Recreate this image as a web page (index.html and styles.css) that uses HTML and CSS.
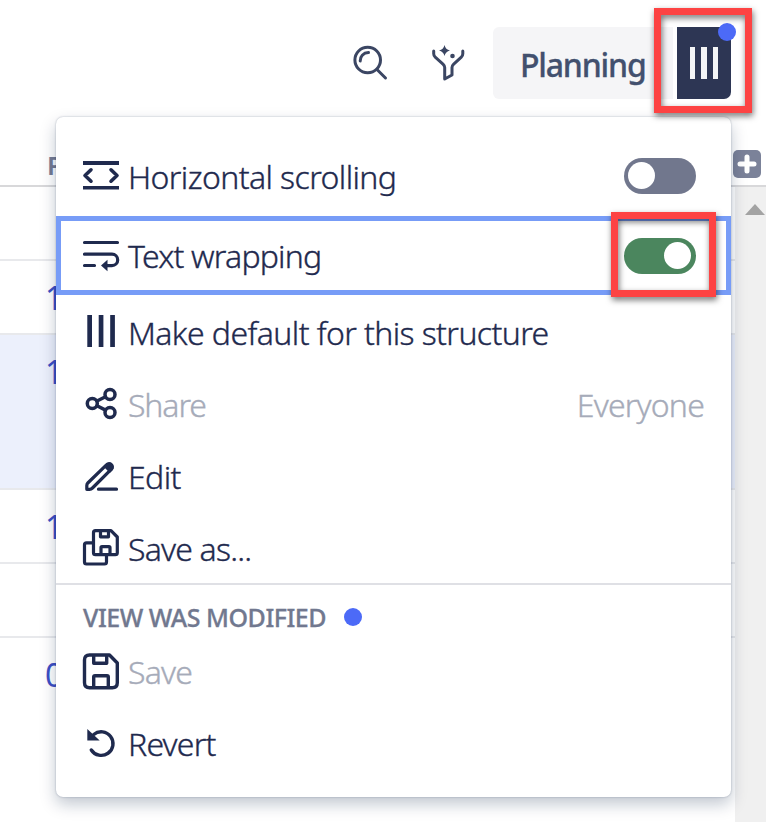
FILE: index.html
```html
<!DOCTYPE html>
<html lang="en">
<head>
<meta charset="utf-8">
<title>Planning</title>
<link rel="stylesheet" href="styles.css">
</head>
<body>
<div class="app">
  <header class="toolbar">
    <svg class="tool search" viewBox="0 0 36 36"><circle cx="15.7" cy="15" r="12.8"/><path d="M25 24.5 33.500 33M8.2 16c-.2-4.300 3-8.200 8.300-8.400" /></svg>
    <svg class="tool funnel" viewBox="0 0 36 38"><path d="M3.700 7v2.800q0 2 1.500 3.300l7.800 7q1.700 1.500 1.700 3.500V35l7.300-4v-7.400q0-2 1.700-3.500l7.600-7q1.500-1.300 1.500-3.300V7"/><path class="solid" d="M14.500 1q1 4.500 5.500 5.500-4.500 1-5.500 5.500-1-4.500-5.500-5.500 4.500-1 5.500-5.500z"/><circle class="solid" cx="22.500" cy="12" r="2.300"/></svg>
    <button class="view-name">Planning</button>
    <button class="view-toggle" aria-label="View options"><i></i><i></i><i></i><span class="dot badge"></span></button>
  </header>
  <div class="table-head"><span class="col">P</span><span class="add"><svg viewBox="0 0 28 28"><path d="M14 7v14M7 14h14"/></svg></span></div>
  <div class="content">
    <div class="rows">
      <div class="row"></div>
      <div class="row">1</div>
      <div class="row selected">1</div>
      <div class="row">1</div>
      <div class="row"></div>
      <div class="row last">0</div>
    </div>
    <div class="scrollbar"><span class="arrow"></span></div>
  </div>

  <div class="menu">
    <div class="item first">
      <svg class="icon" viewBox="0 0 36 36"><path class="fill" d="M0 3h36v4H0zM0 28h36v3.500H0z"/><path d="M8 11.800 2 17.500l6 5.700M28 11.800l6 5.700-6 5.700" stroke-width="3.600"/></svg>
      <span class="t">Horizontal scrolling</span><span class="switch"></span>
    </div>
    <div class="item focused">
      <svg class="icon" viewBox="0 0 36 36"><path d="M1.500 4.500h33M1.500 16.200h27.500a5.700 5.700 0 0 1 0 11.400h-6M1.500 27.500h10"/><path class="fill" d="M18 27.500l6.500-5.700v11.400z"/></svg>
      <span class="t snug">Text wrapping</span><span class="switch on"></span>
    </div>
    <div class="item">
      <svg class="icon" viewBox="0 0 36 36"><path class="fill" d="M4.300 0h4.700v32H4.300zM15.700 0h4.700v32h-4.700zM27.200 0h4.700v32h-4.700z"/></svg>
      <span class="t">Make default for this structure</span>
    </div>
    <div class="item disabled">
      <svg class="icon" viewBox="0 0 36 36"><g stroke-width="3.500"><circle cx="9.300" cy="16.500" r="5"/><circle cx="27" cy="7.500" r="5"/><circle cx="27" cy="25.500" r="5"/><path d="M14 14 22.500 9.800M14 18.800l8.500 4.300"/></g></svg>
      <span class="t tight">Share</span><span class="t snug side">Everyone</span>
    </div>
    <div class="item">
      <svg class="icon" viewBox="0 0 36 36"><path d="M3.800 30.300v-3.800q0-1.500 1-2.500L23.700 5.600a3.200 3.200 0 0 1 4.700 4.600L9.500 29q-1.300 1.300-3 1.300zM15.500 30.200H33.500"/><path class="fill" d="M20.500 7.500l3-3a4.600 4.600 0 0 1 6.300 6.400l-3 3z"/></svg>
      <span class="t">Edit</span>
    </div>
    <div class="item">
      <svg class="icon" viewBox="0 0 36 36"><path d="M12.500-.3h15.500l6.300 6.300v15.700q0 2-2 2H12.500q-2 0-2-2V1.700q0-2 2-2zM17.500 0v5.800h8V0M18 23.500v-6.800q0-1 1-1h7q1 0 1 1v6.800M10 11.800H3.500q-2 0-2 2V31q0 2 2 2h18q2 0 2-2v-7"/></svg>
      <span class="t snug">Save as...</span>
    </div>
    <div class="section"><span class="caption">VIEW WAS MODIFIED</span><span class="dot"></span></div>
    <div class="item disabled">
      <svg class="icon" viewBox="0 0 36 36"><path stroke-width="3.400" d="M6.500 1h20l7.800 8v19.700q0 5-5 5H6.500q-5 0-5-5V6q0-5 5-5zM10.700 1v8.300h13V1M10.700 33.500V23q0-1.300 1.300-1.300h12q1.300 0 1.300 1.300v10.500"/></svg>
      <span class="t snug">Save</span>
    </div>
    <div class="item">
      <svg class="icon" viewBox="0 0 36 36"><path stroke-width="3.400" d="M8.300 24A11.800 11.800 0 1 0 10.700 8.500"/><path class="fill" d="M4.300 3v11.500h12.400z"/></svg>
      <span class="t snug">Revert</span>
    </div>
  </div>
  <div class="mark mark-view"></div>
  <div class="mark mark-switch"></div>
</div>
</body>
</html>
```
FILE: styles.css
```css
* { box-sizing: border-box; }
body { margin: 0; background: #fff; font-family: "Noto Sans", "Open Sans", sans-serif; color: #1f2a4e; }
.app { position: relative; width: 766px; height: 822px; overflow: hidden; display: flex; flex-direction: column; }
button { border: 0; padding: 0; font: inherit; color: inherit; }

.toolbar { height: 141px; flex: none; display: flex; align-items: flex-start; padding: 27px 35px 0 0; justify-content: flex-end; }
.tool { fill: none; stroke: #3b4663; stroke-width: 3; stroke-linecap: round; stroke-linejoin: round; overflow: visible; }
.tool .solid { fill: #3b4663; stroke: none; }
.search { width: 36px; height: 36px; margin: 18px 42px 0 0; }
.funnel { width: 36px; height: 38px; margin: 17px 27px 0 0; }
.view-name { width: 180px; height: 72px; margin-right: 4px; padding: 3px 0 0 27px; text-align: left; background: #f5f5f7; border-radius: 6px 0 0 6px; color: #42506e; font-size: 32px; font-weight: 500; font-stretch: 90%; letter-spacing: -1.2px; -webkit-text-stroke: .3px; }
.view-toggle { position: relative; width: 54px; height: 72px; background: #2d3654; border-radius: 0 0 7px 0; display: flex; justify-content: center; align-items: center; gap: 6px; }
.view-toggle i { width: 5.500px; height: 32px; background: #f3f4f6; }
.dot { width: 18px; height: 18px; border-radius: 50%; background: #4c6af7; }
.badge { position: absolute; right: -5px; top: -4px; }

.table-head { height: 46px; flex: none; border-bottom: 2px solid #d8d8da; display: flex; justify-content: space-between; padding: 9px 5px 0 47px; }
.col { font-size: 26px; line-height: 30px; font-weight: 600; color: #757b93; }
.add { width: 28px; height: 28px; border-radius: 5px; background: #7b8299; }
.add svg { display: block; stroke: #fff; stroke-width: 5; stroke-linecap: round; fill: none; }
.content { flex: 1; display: flex; }
.rows { flex: 1; display: grid; grid-template-rows: 74px 74px 155px 74px 74px 1fr; }
.row { border-bottom: 2px solid #e8e9ec; padding: 17px 0 0 45px; font-size: 32px; line-height: 40px; color: #3d4fc5; }
.row.selected { background: #ecf0fc; }
.row.last { border: 0; }
.scrollbar { width: 31px; background: #f0f0f0; padding: 17px 0 0 10px; }
.arrow { display: block; width: 20px; height: 11px; background: #a3a3a3; clip-path: polygon(50% 0, 100% 100%, 0 100%); }

.menu { position: absolute; left: 56px; top: 117px; width: 675px; height: 680px; background: #fff; border-radius: 7px; box-shadow: 0 0 2px rgba(9,30,66,.32), 0 7px 16px rgba(9,30,66,.25); display: flex; flex-direction: column; }
.item { height: 72px; flex: none; display: flex; align-items: center; padding: 0 27px; }
.item.first { height: 99px; padding: 19px 35px 0 27px; }
.item.focused { height: 79px; border: 5px solid #779cf7; padding: 0 30px 0 22px; margin-bottom: 2px; }
.icon { width: 36px; height: 36px; flex: none; margin-right: 9px; overflow: visible; fill: none; stroke: #1f2a4e; stroke-width: 3.200; stroke-linecap: round; stroke-linejoin: round; }
.icon .fill { fill: #1f2a4e; stroke: none; }
.t { font-size: 32px; line-height: 44px; font-weight: 300; white-space: nowrap; font-stretch: 90%; letter-spacing: -.6px; -webkit-text-stroke: .35px; margin-bottom: 1px; }
.first .t, .focused .t { margin: 1px 0 0; }
.item .snug { letter-spacing: -.8px; }
.item .tight { letter-spacing: -1.1px; }
.disabled .t { color: #a6abb9; }
.side { margin-left: auto; }
.switch { margin-left: auto; width: 72px; height: 36px; border-radius: 18px; background: #71778d; padding: 4px; display: flex; }
.switch::after { content: ""; width: 27px; height: 27px; border-radius: 50%; background: #fff; }
.switch.on { background: #4b865e; justify-content: flex-end; padding-right: 5px; }
.section { height: 62px; flex: none; margin: -2px 0 -9px; border-top: 2px solid #dfe0e5; padding: 4px 27px 0; display: flex; align-items: center; gap: 18px; }
.caption { font-size: 25px; font-weight: 500; color: #71788f; white-space: nowrap; font-stretch: 90%; letter-spacing: -.48px; -webkit-text-stroke: .3px; }
.mark { position: absolute; border: 7px solid #fd4343; filter: drop-shadow(1px 3px 3px rgba(0,0,0,.55)); }
.mark-view { left: 654px; top: 8px; width: 98px; height: 105px; }
.mark-switch { left: 611px; top: 212px; width: 105px; height: 85px; }
```
